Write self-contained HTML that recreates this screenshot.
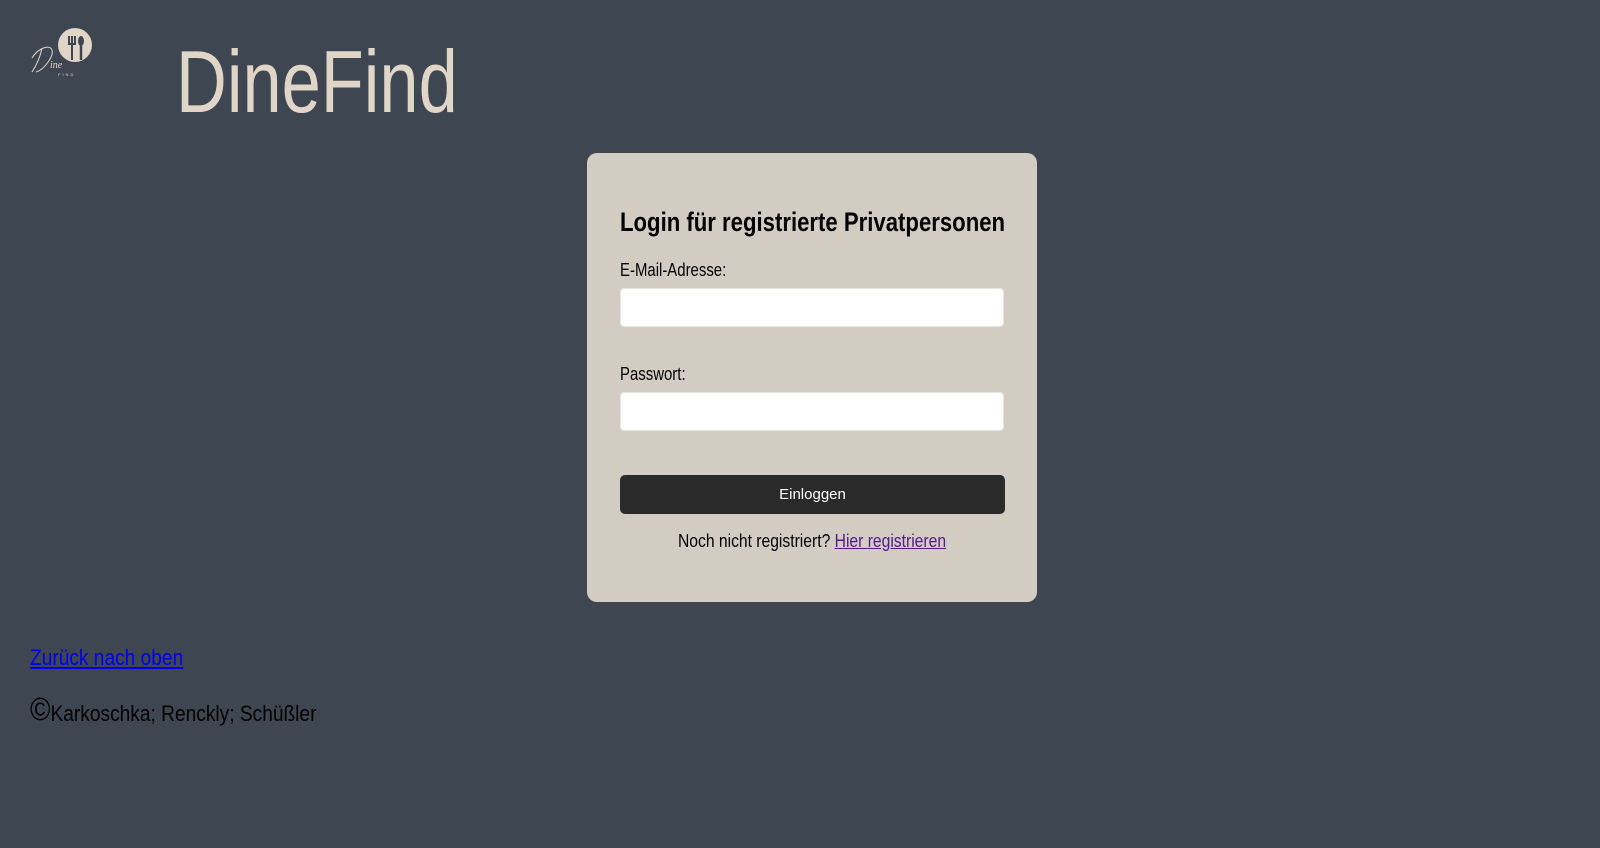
<!DOCTYPE html>
<html><head><meta charset="utf-8"><style>
*{margin:0;padding:0;box-sizing:border-box}
body{width:1600px;height:848px;background:#3e4651;font-family:"Liberation Sans",sans-serif;position:relative;overflow:hidden}
.t{position:absolute;white-space:nowrap;transform-origin:left center}
#brand{left:176px;top:31px;font-size:88px;color:#e0d6c8;transform:scaleX(0.8)}
#card{position:absolute;left:587px;top:153px;width:450px;height:449px;background:#d3ccc3;border-radius:10px}
h2{position:absolute;left:33px;top:54px;font-size:27px;font-weight:bold;color:#000;white-space:nowrap;transform:scaleX(0.82);transform-origin:left center}
.lab{position:absolute;left:33px;font-size:18px;color:#000;transform:scaleX(0.83);transform-origin:left center}
.inp{position:absolute;left:33px;width:384px;height:39px;background:#fff;border-radius:4px;border:1px solid #e8e4de}
.btn{position:absolute;left:33px;top:322px;width:385px;height:39px;background:#2a2a2a;border-radius:5px;color:#fff;font-size:15px;text-align:center;line-height:39px}
.reg{position:absolute;left:0;width:450px;top:378px;text-align:center;font-size:18px;color:#000;transform:scaleX(0.87)}
.reg a{color:#551a8b}
</style></head><body>
<svg style="position:absolute;left:28px;top:26px" width="66" height="54" viewBox="0 0 66 54">
<circle cx="47" cy="19" r="17" fill="#e0d6c8"/>
<g stroke="#3e4651" stroke-width="2" fill="none"><path d="M41 10v8M44 10v8M47 10v8M40 18h8M44 18v16"/></g>
<ellipse cx="53" cy="15" rx="3" ry="5" fill="#3e4651"/><path d="M53 18v16" stroke="#3e4651" stroke-width="2.5"/>
<path d="M4 32c6-10 18-14 20-8s-8 20-16 22M14 22c-2 10-6 18-10 24" stroke="#e0d6c8" stroke-width="1" fill="none"/>
<text x="22" y="42" font-size="10" fill="#e0d6c8" font-family="Liberation Serif" font-style="italic">ine</text>
<text x="30" y="50" font-size="4" fill="#e0d6c8" letter-spacing="2">FIND</text>
</svg>
<div class="t" id="brand">DineFind</div>
<div id="card">
<h2>Login für registrierte Privatpersonen</h2>
<div class="lab" style="top:107px">E-Mail-Adresse:</div>
<div class="inp" style="top:135px"></div>
<div class="lab" style="top:211px">Passwort:</div>
<div class="inp" style="top:239px"></div>
<div class="btn">Einloggen</div>
<div class="reg">Noch nicht registriert? <a href="#">Hier registrieren</a></div>
</div>
<a class="t" href="#" style="left:30px;top:645px;font-size:22px;color:#0000ee;transform:scaleX(0.87)">Zurück nach oben</a>
<div class="t" style="left:30px;top:691px;font-size:22px;color:#000;transform:scaleX(0.87)"><span style="font-size:32px;vertical-align:1px">©</span>Karkoschka; Renckly; Schüßler</div>
</body></html>
